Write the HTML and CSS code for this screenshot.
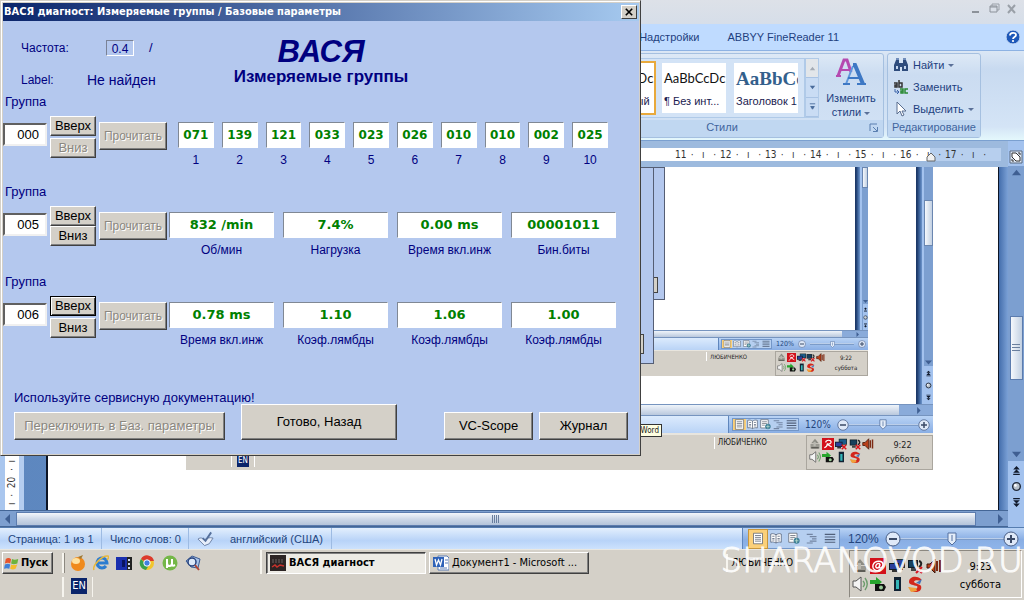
FILE: index.html
```html
<!DOCTYPE html>
<html lang="ru">
<head>
<meta charset="utf-8">
<title>ВАСЯ диагност</title>
<link rel="stylesheet" href="styles.css">
</head>
<body>
<svg class="defs" aria-hidden="true">
  <symbol id="i-eject" viewBox="0 0 16 16"><path d="M8 1l5 6H3z" fill="#8c8c84"/><path d="M2 8h12v6H2z" fill="#9b9a92"/><path d="M3 12h10v2H3z" fill="#5d5c56"/><path d="M6 5h3v6H6z" fill="#b9b8b0"/></symbol>
  <symbol id="i-avira" viewBox="0 0 16 16"><path d="M0 0h16v16H0z" fill="#d3111b"/><path d="M3 13c3-1 4-3 5-6M5 6c0-4 8-4 7 0-1 2-4 3-6 2M8 9l5 3" fill="none" stroke="#fff" stroke-width="1.600"/></symbol>
  <symbol id="i-at" viewBox="0 0 16 16"><path d="M0 0h16v16H0z" fill="#d3111b"/><path d="M10 6c-3-2-6 3-3 4 2 0 3-2 3-4l-1 3c0 2 4 1 4-2 0-5-8-5-10 0-1 5 4 7 8 5" fill="none" stroke="#fff" stroke-width="1.400"/></symbol>
  <symbol id="i-net" viewBox="0 0 16 16"><path d="M5 1h11v8H5z" fill="#233"/><path d="M6 2h9v6H6z" fill="#1b5d8c"/><path d="M0 5h10v7H0z" fill="#111c24"/><path d="M1 6h8v5H1z" fill="#2b3f9a"/><path d="M3 12h5v2H3z" fill="#333"/><path d="M9 9l6 6M15 9l-6 6" stroke="#d8141c" stroke-width="2"/></symbol>
  <symbol id="i-netok" viewBox="0 0 16 16"><path d="M5 1h11v9H5z" fill="#233"/><path d="M6 2h9v7H6z" fill="#2b3f9a"/><path d="M0 5h10v7H0z" fill="#111c24"/><path d="M1 6h8v5H1z" fill="#2b3f9a"/><path d="M3 12h5v2H3zM11 10h3v2h-3z" fill="#333"/></symbol>
  <symbol id="i-net2" viewBox="0 0 16 16"><path d="M1 2h10v8H1z" fill="#111c24"/><path d="M2 3h8v6H2z" fill="#17405c"/><path d="M4 10h5v3H4z" fill="#444"/><path d="M12 3c3 1 3 4 0 6" fill="none" stroke="#222" stroke-width="2"/><path d="M9 9l6 6M15 9l-6 6" stroke="#d8141c" stroke-width="2"/></symbol>
  <symbol id="i-horn" viewBox="0 0 16 16"><path d="M1 6h3l5-5v14l-5-5H1z" fill="#b8401a" stroke="#3c1408"/><path d="M11 3v10M14 2v12" stroke="#7c2a14" stroke-width="2"/></symbol>
  <symbol id="i-vol" viewBox="0 0 16 16"><path d="M1 5h3l5-4v14l-5-4H1z" fill="#f4f4f4" stroke="#555"/><path d="M11 5c2 2 2 4 0 6M13 2c3 4 3 8 0 12" fill="none" stroke="#6c9c6c" stroke-width="1.400"/></symbol>
  <symbol id="i-usb" viewBox="0 0 16 16"><path d="M0 4h6V1l6 5-6 5V8H0z" fill="#27a52d"/><path d="M5 8h9l2 3-2 4H5z" fill="#111"/><circle cx="11" cy="11.500" r="2" fill="#9c9"/></symbol>
  <symbol id="i-batt" viewBox="0 0 16 16"><path d="M5 1h7v14H5z" fill="#123"/><path d="M7 4h3v9H7z" fill="#35b6b8"/></symbol>
  <symbol id="i-cc" viewBox="0 0 16 16"><path d="M14 3C9-1 2 1 2 6c0 3 5 3 8 4 1 1 0 3-2 3-3 0-5-1-6-2 1 4 4 5 7 5 4 0 6-3 5-6-1-2-5-2-7-4 0-2 4-2 7-1z" fill="#d2271c"/><path d="M9 7l6-4-2 5z" fill="#4272ba"/><path d="M1 11l8 1 1 3-6 1z" fill="#f0a03a"/></symbol>
  <symbol id="i-page" viewBox="0 0 16 16"><path d="M2 1h12v14H2z" fill="#fff" stroke="#59606e"/><path d="M4 4h8M4 6.500h8M4 9h8M4 11.500h8" stroke="#59606e"/></symbol>
  <symbol id="i-book" viewBox="0 0 16 16"><path d="M1 2c3-1 5 0 7 1 2-1 4-2 7-1v11c-3-1-5 0-7 1-2-1-4-2-7-1z" fill="#fff" stroke="#4c5a70"/><path d="M8 3v11M3 5h3M3 8h3M3 10h3M10 5h3M10 8h3M10 10h3" stroke="#4c5a70"/></symbol>
  <symbol id="i-web" viewBox="0 0 16 16"><path d="M1 1h11v12H1z" fill="#fff" stroke="#59606e"/><path d="M3 4h7M3 6.500h7M3 9h4" stroke="#59606e"/><circle cx="11.500" cy="11" r="4" fill="#3d7f96"/><path d="M9 11h5M11.500 8v6" stroke="#bfe0d0"/></symbol>
  <symbol id="i-outline" viewBox="0 0 16 16"><path d="M1 2.500h8M5 5.500h9M8 8.500h6M5 11.500h9M1 14h8" stroke="#7385a2" stroke-width="1.500"/></symbol>
  <symbol id="i-draft" viewBox="0 0 16 16"><path d="M1 2.500h14M1 6h14M1 9.500h14M1 13h14" stroke="#51607a" stroke-width="1.500"/></symbol>
  <symbol id="i-up" viewBox="0 0 10 10"><path d="M5 2l5 6H0z" fill="#3f5f92"/></symbol>
  <symbol id="i-down" viewBox="0 0 10 10"><path d="M5 8l5-6H0z" fill="#3f5f92"/></symbol>
  <symbol id="i-left" viewBox="0 0 10 10"><path d="M2 5l5-5v10z" fill="#3f5f92"/></symbol>
  <symbol id="i-right" viewBox="0 0 10 10"><path d="M8 5L3 0v10z" fill="#3f5f92"/></symbol>
  <symbol id="i-pgup" viewBox="0 0 10 10"><path d="M5 1l3 3H2zM5 4l3 3H2zM2 8h6v1H2z" fill="#111a2c"/></symbol>
  <symbol id="i-pgdn" viewBox="0 0 10 10"><path d="M2 1h6v1H2zM5 6L2 3h6zM5 9L2 6h6z" fill="#111a2c"/></symbol>
  <symbol id="i-ball" viewBox="0 0 10 10"><circle cx="5" cy="5" r="3.500" fill="#b9c2cc" stroke="#222b3c" stroke-width="1.300"/><circle cx="4" cy="4" r="1.200" fill="#fff"/></symbol>
  <symbol id="i-minus" viewBox="0 0 16 16"><circle cx="8" cy="8" r="7" fill="#dfe9f8" stroke="#4a5f86"/><path d="M4 8h8" stroke="#3b4a66" stroke-width="2"/></symbol>
  <symbol id="i-plus" viewBox="0 0 16 16"><circle cx="8" cy="8" r="7" fill="#dfe9f8" stroke="#4a5f86"/><path d="M4 8h8M8 4v8" stroke="#3b4a66" stroke-width="2"/></symbol>
  <symbol id="i-knob" viewBox="0 0 10 14"><path d="M1 1h8v8l-4 4-4-4z" fill="#e4edf9" stroke="#5470a0"/><path d="M5 3v6" stroke="#5470a0"/></symbol>
</svg>

<div class="desktop">
  <main class="word">
    <header class="word-title">
      <svg class="win-ctl" viewBox="0 0 52 14" aria-hidden="true"><path d="M4 11h7" stroke="#8c929a" stroke-width="2"/><path d="M24 5V3h7v6h-2" fill="none" stroke="#9aa0a8"/><path d="M22 5h7v6h-7z" fill="none" stroke="#8c929a"/><path d="M22 6h7" stroke="#8c929a"/><path d="M40 4l7 8M47 4l-7 8" stroke="#9aa0a8" stroke-width="2"/></svg>
    </header>
    <nav class="tabs">
      <a class="tab" href="#">Надстройки</a>
      <a class="tab" href="#">ABBYY FineReader 11</a>
      <svg class="help" viewBox="0 0 16 16" aria-hidden="true"><circle cx="8" cy="8" r="7" fill="#1e58b8" stroke="#c8dcf6"/><path d="M5 6.500C5 3 11 3 11 6c0 2-3 2-3 4" fill="none" stroke="#fff" stroke-width="1.800"/><circle cx="8" cy="12" r="1.100" fill="#fff"/></svg>
    </nav>
    <section class="ribbon">
      <div class="rgroup styles-group">
        <div class="rbody">
          <div class="gallery">
            <button class="style current"><span class="sample">AaBbCcDc</span><span class="sname">¶ Обычный</span></button>
            <button class="style"><span class="sample">AaBbCcDc</span><span class="sname">¶ Без инт...</span></button>
            <button class="style"><span class="sample heading">AaBbCc</span><span class="sname">Заголовок 1</span></button>
          </div>
          <div class="spinner">
            <button class="spin dim" aria-label="Вверх"><svg viewBox="0 0 10 10"><path d="M5 3l3 4H2z" fill="#a4abb5"/></svg></button>
            <button class="spin" aria-label="Вниз"><svg viewBox="0 0 10 10"><path d="M5 7L2 3h6z" fill="#4a6c9c"/></svg></button>
            <button class="spin" aria-label="Ещё"><svg viewBox="0 0 10 10"><path d="M2 2h6M5 8L3 5h4z" fill="#4a6c9c" stroke="#4a6c9c"/></svg></button>
          </div>
          <button class="change">
            <svg class="aa" viewBox="0 0 30 28" aria-hidden="true"><path d="M2 18L8 2h3l4 12" fill="none" stroke="#b54ab0" stroke-width="3"/><path d="M5 12h8M0 18h5" stroke="#b54ab0" stroke-width="2"/><path d="M10 26l7-18" fill="none" stroke="#5f97dc" stroke-width="2"/><path d="M17 7h2l8 19" fill="none" stroke="#3e78c4" stroke-width="4"/><path d="M12 20h12M7 26h7M21 26h9" stroke="#3e78c4" stroke-width="2"/></svg>
            <span>Изменить<br>стили <i class="caret"></i></span>
          </button>
        </div>
        <div class="rlabel">Стили<svg class="launch" viewBox="0 0 10 10" aria-hidden="true"><path d="M1 8V1h7M4 4l4 4M8.500 4v4.500H4" fill="none" stroke="#5a7fb0"/></svg></div>
      </div>
      <div class="rgroup edit-group">
        <div class="rbody edit">
          <button class="cmd"><svg viewBox="0 0 16 16" aria-hidden="true"><path d="M3 3h3v3h4V3h3l2 5v6H9v-4H7v4H1V8z" fill="#2e4c7c"/><path d="M3 1h3v2H3zM10 1h3v2h-3z" fill="#6f8cba"/><path d="M3 9h2v3H3zM11 9h2v3h-2z" fill="#c4d6ee"/></svg>Найти <i class="caret"></i></button>
          <button class="cmd"><svg viewBox="0 0 16 16" aria-hidden="true"><path d="M1 4h3v4H2V6h2M6 1v7h3V4H6" fill="none" stroke="#333" stroke-width="1.500"/><path d="M2 10v3h4M4 11l2 2-2 2" fill="none" stroke="#3b62a8"/><path d="M7 10h3v4H8v-2h2M15 10h-3v4h3" fill="none" stroke="#2a8a34" stroke-width="1.500"/></svg>Заменить</button>
          <button class="cmd"><svg viewBox="0 0 16 16" aria-hidden="true"><path d="M4 1v12l3-3 2 5 2-1-2-4h4z" fill="#fff" stroke="#5a6e90"/></svg>Выделить <i class="caret"></i></button>
        </div>
        <div class="rlabel">Редактирование</div>
      </div>
    </section>

    <div class="work">
      <div class="canvas">
        <div class="ruler">
          <div class="scale">
            <span class="cm">11</span><span class="cm">12</span><span class="cm">13</span><span class="cm">14</span><span class="cm">15</span><span class="cm">16</span><span class="cm">17</span>
          </div>
          <svg class="indent" viewBox="0 0 10 10" aria-hidden="true"><path d="M5 1l4 4v4H1V5z" fill="#f0f0f0" stroke="#666"/></svg>
        </div>
        <div class="doc">
          <div class="vruler"><span>ı  ·  20  ·  ı</span></div>
          <div class="page">
            <div class="shot">
              <div class="s-body">
                <div class="s-page">
                  <div class="shot small">
                    <div class="s-body">
                      <div class="s-page"></div>
                      <div class="s-edge"></div>
                      <div class="s-scroll"><i class="s-thumb"></i><svg><use href="#i-down"/></svg><div class="s-nav"><svg><use href="#i-pgup"/></svg><svg><use href="#i-ball"/></svg><svg><use href="#i-pgdn"/></svg></div></div>
                    </div>
                    <div class="s-hscroll"><i></i><svg><use href="#i-right"/></svg></div>
                    <div class="s-status"><div class="s-zoom"><span class="s-views"><svg><use href="#i-page"/></svg><svg><use href="#i-book"/></svg><svg><use href="#i-web"/></svg><svg><use href="#i-outline"/></svg><svg><use href="#i-draft"/></svg></span><span>120%</span><span class="track"><svg class="round"><use href="#i-minus"/></svg><svg class="knob"><use href="#i-knob"/></svg><svg class="round"><use href="#i-plus"/></svg></span></div></div>
                    <div class="s-task"><span class="s-user">ЛЮБИЧЕНКО</span><div class="s-tray"><div class="icons"><svg><use href="#i-eject"/></svg><svg><use href="#i-avira"/></svg><svg><use href="#i-net"/></svg><svg><use href="#i-net2"/></svg><svg><use href="#i-horn"/></svg><svg><use href="#i-vol"/></svg><svg><use href="#i-usb"/></svg><svg><use href="#i-batt"/></svg><svg><use href="#i-cc"/></svg></div><div class="clock"><span>9:22</span><span>суббота</span></div></div></div>
                    <div class="s-window"><i class="s-button"></i></div>
                  </div>
                </div>
                <div class="s-edge"></div>
                <div class="s-scroll"><i class="s-thumb"></i><svg><use href="#i-down"/></svg><div class="s-nav"><svg><use href="#i-pgup"/></svg><svg><use href="#i-ball"/></svg><svg><use href="#i-pgdn"/></svg></div></div>
              </div>
              <div class="s-hscroll"><i></i><svg><use href="#i-right"/></svg></div>
              <div class="s-status"><div class="s-zoom"><span class="s-views"><svg><use href="#i-page"/></svg><svg><use href="#i-book"/></svg><svg><use href="#i-web"/></svg><svg><use href="#i-outline"/></svg><svg><use href="#i-draft"/></svg></span><span>120%</span><span class="track"><svg class="round"><use href="#i-minus"/></svg><svg class="knob"><use href="#i-knob"/></svg><svg class="round"><use href="#i-plus"/></svg></span></div></div>
              <div class="s-task"><span class="s-lang">EN</span><span class="s-user">ЛЮБИЧЕНКО</span><div class="s-tray"><div class="icons"><svg><use href="#i-eject"/></svg><svg><use href="#i-avira"/></svg><svg><use href="#i-net"/></svg><svg><use href="#i-net2"/></svg><svg><use href="#i-horn"/></svg><svg><use href="#i-vol"/></svg><svg><use href="#i-usb"/></svg><svg><use href="#i-batt"/></svg><svg><use href="#i-cc"/></svg></div><div class="clock"><span>9:22</span><span>суббота</span></div></div></div>
              <div class="s-window"><i class="s-button"></i></div>
              <span class="s-tip">Word</span>
            </div>
          </div>
          <div class="edge"></div>
        </div>
        <div class="hscroll"><svg><use href="#i-left"/></svg><div class="hthumb"><i class="grip"></i></div><svg><use href="#i-right"/></svg></div>
      </div>
      <div class="vscroll">
        <svg class="rtoggle" viewBox="0 0 14 14" aria-hidden="true"><path d="M1 1h12v12H1z" fill="#dce6f4" stroke="#59687e"/><path d="M3 7V3h4l4 4v4H7zM9 3h2v2M3 9v2h2" fill="#fff" stroke="#333"/></svg>
        <div class="vtrack"><svg><use href="#i-up"/></svg><div class="vthumb"><i class="grip"></i></div><svg><use href="#i-down"/></svg></div>
        <div class="vnav"><svg><use href="#i-pgup"/></svg><svg><use href="#i-ball"/></svg><svg><use href="#i-pgdn"/></svg></div>
      </div>
    </div>

    <footer class="status">
      <span class="cell c1">Страница: 1 из 1</span>
      <span class="cell c2">Число слов: 0</span>
      <span class="cell c3"><svg class="proof" viewBox="0 0 18 16" aria-hidden="true"><path d="M1 8c3-2 5-1 7 1 2-2 5-3 9-2l-4 6-5 2z" fill="#e6eefa" stroke="#6b80a4"/><path d="M6 7l3 3 6-9" fill="none" stroke="#55709c" stroke-width="2"/></svg>английский (США)</span>
      <div class="zoombar">
        <div class="views">
          <button class="view on" aria-label="Разметка"><svg><use href="#i-page"/></svg></button><button class="view" aria-label="Чтение"><svg><use href="#i-book"/></svg></button><button class="view" aria-label="Веб"><svg><use href="#i-web"/></svg></button><button class="view" aria-label="Структура"><svg><use href="#i-outline"/></svg></button><button class="view" aria-label="Черновик"><svg><use href="#i-draft"/></svg></button>
        </div>
        <span class="pct">120%</span>
        <span class="track"><svg class="round"><use href="#i-minus"/></svg><svg class="knob"><use href="#i-knob"/></svg><svg class="round"><use href="#i-plus"/></svg></span>
      </div>
    </footer>
  </main>

  <footer class="taskbar">
    <button class="start"><svg viewBox="0 0 18 16" aria-hidden="true"><path d="M2 3c3-2 4-1 6 0L7 8C5 7 4 7 1 8z" fill="#e8542c"/><path d="M9 3c2 1 4 1 7 0l-1 5c-3 1-5 1-7 0z" fill="#6cb33c"/><path d="M1 9c3-1 4-1 6 0l-1 5c-2-1-4-1-6 0z" fill="#3f7fd8"/><path d="M8 9c2 1 4 1 7 0l-2 5c-2 1-4 1-6 0z" fill="#f4bc2c"/></svg>Пуск</button>
    <div class="toolbars">
      <div class="quick">
        <svg viewBox="0 0 16 16" aria-hidden="true"><circle cx="8" cy="9" r="7" fill="#f08a1c"/><ellipse cx="6" cy="6" rx="4" ry="3" fill="#ffe2a0"/><path d="M8 2l5-2-2 4z" fill="#a07a34"/></svg>
        <svg viewBox="0 0 16 16" aria-hidden="true"><path d="M13 11a5 5 0 1 1 1-3H4" fill="none" stroke="#2c7cd0" stroke-width="3"/><path d="M1 15C-1 11 9 0 15 1c1 1 0 3-1 4" fill="none" stroke="#e8b83c" stroke-width="1.500"/></svg>
        <svg viewBox="0 0 16 16" aria-hidden="true"><path d="M0 2h16v13H0z" fill="#1a2fae"/><path d="M6 5h3v7H6z" fill="#0a1560"/><path d="M11 2h5v13h-5z" fill="#222"/><path d="M12 4h2v2h-2zM12 8h2v2h-2zM12 12h2v2h-2z" fill="#c8d4ee"/></svg>
        <svg viewBox="0 0 16 16" aria-hidden="true"><circle cx="8" cy="8" r="7" fill="#f2c52c"/><path d="M8 8L2 4a7 7 0 0 1 13 2H8z" fill="#dc3a2c"/><path d="M2 4a7 7 0 0 0 5 11l3-5-3-1z" fill="#38a04c"/><circle cx="8" cy="8" r="3.200" fill="#3f7fe0" stroke="#fff"/></svg>
        <svg viewBox="0 0 16 16" aria-hidden="true"><circle cx="8" cy="8" r="7.500" fill="#74b748"/><path d="M5 13V4M5 8c0 4 5 4 5 0V4v5c0 2 1 2 3 1" fill="none" stroke="#fff" stroke-width="2"/></svg>
        <svg viewBox="0 0 16 16" aria-hidden="true"><path d="M1 6l6-5 8 3-2 9-7-1z" fill="#a9c4ea" stroke="#3d5c94"/><circle cx="7" cy="7" r="4" fill="#dce9fa" stroke="#26417c" stroke-width="1.500"/><path d="M10 10l4 5" stroke="#b04434" stroke-width="2"/></svg>
      </div>
      <div class="langbar"><span class="lang">EN</span></div>
    </div>
    <div class="tasks">
      <button class="task active"><svg viewBox="0 0 16 16" aria-hidden="true"><path d="M0 0h16v16H0z" fill="#2c2424"/><path d="M2 5h12M2 7h12" stroke="#6a6262" stroke-dasharray="2 1"/><path d="M2 12l3-2 2 2 3-2 4 1" fill="none" stroke="#c8322c" stroke-width="1.500"/></svg><span>ВАСЯ диагност</span></button>
      <button class="task"><svg viewBox="0 0 16 16" aria-hidden="true"><path d="M5 1h9l2 2v12H5z" fill="#fff" stroke="#5c7cb4"/><path d="M12 5h3M12 8h3M7 13h7" stroke="#5c7cb4"/><path d="M0 2h11v10H0z" fill="#2f62b8"/><path d="M2 4l1.500 6L5.500 5l2 5L9 4" fill="none" stroke="#fff" stroke-width="1.300"/></svg><span>Документ1 - Microsoft ...</span></button>
    </div>
    <div class="user">ЛЮБИЧЕНКО</div>
    <div class="tray"><div class="icons"><svg><use href="#i-eject"/></svg><svg><use href="#i-at"/></svg><svg><use href="#i-netok"/></svg><svg><use href="#i-net2"/></svg><svg><use href="#i-horn"/></svg><svg><use href="#i-vol"/></svg><svg><use href="#i-usb"/></svg><svg><use href="#i-batt"/></svg><svg><use href="#i-cc"/></svg></div><div class="clock"><span>9:23</span><span>суббота</span></div></div>
  </footer>

  <section class="dialog" aria-labelledby="dlg-title">
    <div class="dlg-bar"><span id="dlg-title">ВАСЯ диагност: Измеряемые группы / Базовые параметры</span><button class="close" aria-label="Закрыть"><svg viewBox="0 0 10 10"><path d="M1 1l8 8M9 1L1 9" stroke="#000" stroke-width="2"/></svg></button></div>
    <div class="dlg-body">
      <div class="head">
        <dl class="info">
          <dt>Частота:</dt><dd><span class="freq">0.4</span><span>/</span></dd>
          <dt>Label:</dt><dd class="found">Не найден</dd>
        </dl>
        <div class="brand"><h1>ВАСЯ</h1><h2>Измеряемые группы</h2></div>
      </div>

      <div class="group">
        <label class="glabel" for="g1">Группа</label>
        <div class="grow">
          <input class="num" id="g1" value="000">
          <div class="updown spaced"><button class="btn">Вверх</button><button class="btn" disabled>Вниз</button></div>
          <button class="btn read" disabled>Прочитать</button>
          <div class="values ten">
            <div class="val"><output>071</output><span>1</span></div>
            <div class="val"><output>139</output><span>2</span></div>
            <div class="val"><output>121</output><span>3</span></div>
            <div class="val"><output>033</output><span>4</span></div>
            <div class="val"><output>023</output><span>5</span></div>
            <div class="val"><output>026</output><span>6</span></div>
            <div class="val"><output>010</output><span>7</span></div>
            <div class="val"><output>010</output><span>8</span></div>
            <div class="val"><output>002</output><span>9</span></div>
            <div class="val"><output>025</output><span>10</span></div>
          </div>
        </div>
      </div>
      <div class="group">
        <label class="glabel" for="g2">Группа</label>
        <div class="grow">
          <input class="num" id="g2" value="005">
          <div class="updown"><button class="btn">Вверх</button><button class="btn">Вниз</button></div>
          <button class="btn read" disabled>Прочитать</button>
          <div class="values">
            <div class="val"><output>832 /min</output><span>Об/мин</span></div>
            <div class="val"><output>7.4%</output><span>Нагрузка</span></div>
            <div class="val"><output>0.00 ms</output><span>Время вкл.инж</span></div>
            <div class="val"><output>00001011</output><span>Бин.биты</span></div>
          </div>
        </div>
      </div>
      <div class="group">
        <label class="glabel" for="g3">Группа</label>
        <div class="grow">
          <input class="num" id="g3" value="006">
          <div class="updown spaced"><button class="btn default">Вверх</button><button class="btn">Вниз</button></div>
          <button class="btn read" disabled>Прочитать</button>
          <div class="values">
            <div class="val"><output>0.78 ms</output><span>Время вкл.инж</span></div>
            <div class="val"><output>1.10</output><span>Коэф.лямбды</span></div>
            <div class="val"><output>1.06</output><span>Коэф.лямбды</span></div>
            <div class="val"><output>1.00</output><span>Коэф.лямбды</span></div>
          </div>
        </div>
      </div>

      <div class="foot">
        <p class="hint">Используйте сервисную документацию!</p>
        <div class="actions">
          <button class="btn switch" disabled>Переключить в Баз. параметры</button>
          <button class="btn done">Готово, Назад</button>
          <button class="btn side">VC-Scope</button>
          <button class="btn side">Журнал</button>
        </div>
      </div>
    </div>
  </section>

  <div class="mark">SHARANOVOD.RU</div>
</div>
</body>
</html>
```
FILE: styles.css
```css
* { box-sizing: border-box; }
body { margin: 0; font: 11px/16px "Liberation Sans", Arial, sans-serif; color: #1c3a74; }
button, input, output { font: inherit; color: inherit; margin: 0; padding: 0; }
button { border: 0; background: none; }
svg { display: block; flex: none; }
.defs { position: absolute; width: 0; height: 0; }
.desktop { position: relative; display: flex; flex-direction: column; height: 100vh; min-height: 600px; overflow: hidden; background: #fff; }

/* Word window */
.word { flex: 1; min-height: 0; display: flex; flex-direction: column; }
.word-title { height: 24px; background: linear-gradient(#dde1e8, #d6dee9); display: flex; justify-content: flex-end; padding: 1px 4px; }
.win-ctl { width: 52px; height: 14px; }
.tabs { height: 26px; display: flex; align-items: center; justify-content: flex-end; background: #bfdbff; padding-right: 3px; }
.tab { color: #1e3f80; text-decoration: none; margin-right: 28px; }
.tab:nth-child(2) { margin-right: 166px; }
.help { width: 16px; height: 16px; }
.ribbon { height: 91px; display: flex; justify-content: flex-end; gap: 3px; padding: 2px 43px 2px 0; background: linear-gradient(#dbe7f5, #c8daf0 20%, #d4e4f6 85%, #e4f8fc); border-top: 1px solid #8db2e3; border-bottom: 1px solid #7ba0d0; }
.rgroup { display: flex; flex-direction: column; border: 1px solid #a5c0e0; border-radius: 3px; background: linear-gradient(#dde9f6, #cbdcf1 25%, #d2e2f5); }
.rbody { flex: 1; display: flex; }
.rlabel { position: relative; height: 17px; line-height: 15px; text-align: center; color: #41659e; background: #c0d7f1; padding: 0 4px; }
.styles-group .rlabel { padding-left: 140px; }
.styles-group { width: 460px; }
.edit-group { width: 94px; }
.styles-group .rbody { justify-content: flex-end; padding-top: 4px; }
.launch { position: absolute; right: 4px; top: 3px; width: 10px; height: 10px; }
.gallery { display: flex; gap: 4px; height: 60px; padding: 2px 4px; background: #d3e3f6; border: 1px solid #b0cae8; }
.style { width: 68px; height: 54px; padding: 4px 2px; background: #fff; border: 2px solid #d3e3f6; overflow: hidden; white-space: nowrap; color: #1a1a50; text-align: left; display: flex; flex-direction: column; justify-content: space-between; }
.style.current { border-color: #e8a93c; }
.sample { font: 13px/22px Lato, sans-serif; color: #111; }
.sample.heading { font: bold 19px/24px "Liberation Serif", serif; color: #33608c; }
.spinner { display: flex; flex-direction: column; height: 60px; width: 14px; border: 1px solid #b0cae8; }
.spin { flex: 1; background: #c9dcf4; border-bottom: 1px solid #a9c3e4; display: grid; place-items: center; }
.spin.dim { background: #e2e6ea; }
.spin svg { width: 9px; height: 9px; }
.change { width: 64px; color: #1e3f80; display: flex; flex-direction: column; align-items: center; line-height: 14px; gap: 5px; }
.aa { width: 30px; height: 28px; }
.caret { display: inline-block; border: 3px solid transparent; border-top-color: #5a7098; border-bottom: 0; vertical-align: middle; }
.edit { flex-direction: column; padding: 0 5px; }
.cmd { height: 22px; display: flex; align-items: center; gap: 4px; color: #1e3f80; }
.cmd svg { width: 16px; height: 16px; }

.work { flex: 1; min-height: 0; display: flex; }
.canvas { flex: 1; min-width: 0; display: flex; flex-direction: column; }
.ruler { position: relative; height: 26px; background: #9dbade; padding: 7px 7px 6px 0; display: flex; }
.scale { flex: 1; display: flex; justify-content: flex-end; background: linear-gradient(90deg, #fff calc(100% - 71px), #b7cfee 0); font: 10px/13px "DejaVu Sans Condensed", "DejaVu Sans", sans-serif; color: #333; padding-right: 11px; }
.cm { width: 45px; display: flex; justify-content: space-between; padding-right: 4px; }
.cm::after { content: "·   ı   ·"; white-space: pre; }
.indent { position: absolute; right: 72px; bottom: 5px; width: 10px; height: 10px; }
.doc { flex: 1; min-height: 0; display: flex; background: linear-gradient(90deg, #5d87bf, #6c94cb); }
.vruler { width: 24px; margin-right: 22px; padding-bottom: 5px; display: flex; justify-content: flex-start; align-items: flex-end; background: linear-gradient(90deg, #a9c6ee 5px, #fff 5px, #fff 19px, #b4cdf0 19px); }
.vruler span { writing-mode: vertical-rl; transform: rotate(180deg); font: 10px/14px "DejaVu Sans Condensed", sans-serif; color: #333; margin-left: 5px; white-space: pre; }
.page { flex: 1; min-width: 0; background: #fff; border: solid #0c1424; border-width: 0 1px 0 2px; padding-left: 138px; padding-right: 65px; }
.edge { width: 9px; background: linear-gradient(90deg, #446eac, #7ba1d6); }
.hscroll { height: 17px; display: flex; align-items: center; background: #7d9fcf; border: solid #446696; border-width: 1px 0; }
.hscroll svg { width: 10px; height: 10px; margin: 0 3px; }
.hscroll svg:last-child { margin: 0 3px 0 19px; }
.hthumb { flex: 1; height: 14px; background: linear-gradient(#f3f6fb, #cdd8e8 50%, #b4c4da); border: 1px solid #5c7cae; display: grid; place-items: center; }
.grip { width: 8px; height: 8px; background: repeating-linear-gradient(90deg, #6a7f9e 0 1px, transparent 1px 2px); }
.vscroll { width: 16px; display: flex; flex-direction: column; align-items: center; background: #a3c2ee; }
.rtoggle { width: 14px; height: 14px; margin: 9px 0 2px; }
.vtrack { flex: 1; width: 16px; display: flex; flex-direction: column; align-items: center; background: #7c9fd0; padding: 2px 0; }
.vtrack svg { width: 9px; height: 9px; }
.vthumb { width: 13px; height: 64px; margin: 139px 0 auto; background: linear-gradient(90deg, #f5f8fc, #c2d0e2); border: 1px solid #5c7cae; display: grid; place-items: center; }
.vthumb .grip { background: repeating-linear-gradient(#6a7f9e 0 1px, transparent 1px 3px); }
.vnav { display: flex; flex-direction: column; gap: 5px; padding: 4px 0 19px; }
.vnav svg { width: 11px; height: 11px; }

.status { height: 22px; display: flex; background: linear-gradient(#e3effd, #b8d3f8 60%, #cde2fd); border-top: 1px solid #567db0; color: #24467e; line-height: 20px; }
.cell { border-right: 1px solid #9dbbe3; padding-left: 8px; white-space: nowrap; display: flex; align-items: center; }
.c1 { width: 102px; }
.c2 { width: 87px; }
.c3 { width: 143px; gap: 16px; }
.proof { width: 17px; height: 16px; }
.zoombar { margin-left: auto; width: 282px; display: flex; align-items: center; padding: 0 5px; background: linear-gradient(#b9d3f5, #89aee4 55%, #8fb5ea); border-left: 1px solid #5f86bd; }
.views { display: flex; border: 1px solid #7396c8; background: #b6cff0; }
.view { width: 18px; height: 18px; display: grid; place-items: center; }
.view.on { background: #fbd07a; outline: 1px solid #c8963c; }
.view svg { width: 12px; height: 13px; }
.pct { width: 45px; padding-left: 8px; font-size: 12px; }
.track { flex: 1; display: flex; align-items: center; justify-content: space-between; background: linear-gradient(#dbe8fa, #5c82b8) center / calc(100% - 24px) 2px no-repeat; }
.round { width: 16px; height: 16px; }
.knob { width: 10px; height: 14px; }

/* Screenshot pasted in the page */
.shot { position: relative; height: 303px; display: flex; flex-direction: column; background: #fff; font: 10px/12px "DejaVu Sans Condensed", "DejaVu Sans", sans-serif; color: #222; }
.s-body { flex: 1; min-height: 0; display: flex; }
.s-page { flex: 1; display: flex; justify-content: flex-end; padding-right: 48px; }
.s-edge { width: 6px; background: linear-gradient(90deg, #1c3868 1px, #3f669e, #6f96cc); }
.s-scroll { width: 11px; padding-top: 33px; background: #7c9fd0; display: flex; flex-direction: column; align-items: center; border-left: 2px solid #a3c2ee; }
.s-thumb { width: 9px; height: 46px; margin-bottom: auto; background: linear-gradient(90deg, #f5f8fc, #c2d0e2); border: 1px solid #6a86b0; }
.s-scroll svg { width: 7px; height: 7px; }
.s-nav { background: #a3c2ee; display: flex; flex-direction: column; align-items: center; gap: 5px; padding: 4px 1px 3px; }
.s-hscroll { height: 12px; display: flex; align-items: center; justify-content: flex-end; background: #8aabda; border: 1px solid #7694bf; border-right: 0; }
.s-hscroll i { flex: 1; height: 10px; background: linear-gradient(#eff4fa, #b9c8dd); }
.s-hscroll svg { width: 7px; height: 7px; margin: 0 11px 0 16px; }
.s-status { height: 17px; display: flex; justify-content: flex-end; background: linear-gradient(#dcebfd, #b9d3f6); color: #24467e; }
.s-zoom { width: 205px; display: flex; align-items: center; gap: 6px; padding: 0 3px; background: linear-gradient(#b9d3f5, #89aee4); border-left: 1px solid #5f86bd; }
.s-views { display: flex; justify-content: space-between; width: 67px; border: 1px solid #7396c8; background: linear-gradient(90deg, #fbd07a 20%, #b6cff0 20%); padding: 0 1px; }
.s-views svg { width: 11px; height: 11px; }
.s-zoom .round { width: 12px; height: 12px; }
.s-zoom .knob { width: 8px; height: 11px; }
.s-task { height: 37px; display: flex; background: #d4d0c8; border-top: 2px solid #e8e5de; }
.s-lang { align-self: flex-end; width: 24px; margin: 0 0 3px 45px; padding: 0 5px; border: solid #fff; border-width: 0 1px; color: #fff; font-size: 8px; background: #0a246a content-box; text-align: center; }
.s-user { margin: 2px 39px 0 auto; padding-left: 3px; height: 12px; border-left: 1px solid #fff; font-size: 8px; }
.s-tray { width: 127px; display: flex; border: 1px solid #aaa69e; padding: 2px; }
.icons { display: grid; grid-template-columns: repeat(5, 1fr); align-content: start; }
.s-tray .icons { width: 66px; row-gap: 1px; }
.s-tray .icons svg { width: 12px; height: 12px; }
.clock { flex: 1; display: flex; flex-direction: column; align-items: center; }
.s-tray .clock { line-height: 14px; font-size: 9px; }
.s-window { position: absolute; left: 0; top: 0; width: 468px; height: 197px; background: #b4c8ee; border: 1px solid #555e74; }
.s-button { position: absolute; right: 9px; bottom: 9px; width: 40px; height: 20px; background: #d4d0c8; border: 1px solid #444; }
.s-tip { position: absolute; right: 271px; top: 257px; padding: 0 2px; border: 1px solid #333; background: #ffffe1; line-height: 11px; font-size: 8px; white-space: nowrap; }
.small { width: 568px; height: 209px; font-size: 7px; line-height: 9px; }
.small .s-page { padding: 0; }
.small .s-edge { width: 5px; }
.small .s-scroll { width: 8px; padding-top: 0; }
.small .s-thumb { width: 6px; height: 21px; }
.small .s-scroll svg { width: 5px; height: 5px; }
.small .s-nav { gap: 3px; padding: 3px 0 2px; }
.small .s-hscroll { height: 8px; }
.small .s-hscroll i { height: 6px; }
.small .s-hscroll svg { width: 5px; height: 5px; margin: 0 8px 0 13px; }
.small .s-status { height: 12px; }
.small .s-zoom { width: 150px; gap: 4px; padding: 0 2px; }
.small .s-views { width: 51px; }
.small .s-views svg { width: 8px; height: 8px; }
.small .s-zoom .round { width: 8px; height: 8px; }
.small .s-zoom .knob { width: 5px; height: 7px; }
.small .s-task { height: 26px; border-top-width: 1px; }
.small .s-user { margin: 1px 28px 0 auto; height: 9px; font-size: 6px; }
.small .s-tray { width: 93px; padding: 1px; }
.small .s-tray .icons { width: 49px; row-gap: 1px; }
.small .s-tray .icons svg { width: 9px; height: 9px; }
.small .s-tray .clock { font-size: 6px; line-height: 10px; }
.small .s-window { width: 365px; height: 133px; }
.small .s-button { right: 6px; bottom: 6px; height: 16px; }

/* Taskbar */
.taskbar { height: 51px; display: flex; align-items: flex-start; background: #d4d0c8; border-top: 1px solid #e9e7e1; padding: 0 2px; color: #000; font: 11px/14px "DejaVu Sans Condensed", "DejaVu Sans", sans-serif; }
.start, .task { height: 22px; margin-top: 2px; background: #d4d0c8; border: 1px solid; border-color: #fff #404040 #404040 #fff; box-shadow: inset -1px -1px #808080; display: flex; align-items: center; gap: 3px; }
.start { width: 51px; font-weight: bold; gap: 1px; padding-left: 1px; }
.start svg { width: 16px; height: 15px; }
.toolbars { width: 198px; margin-left: 9px; padding-top: 3px; display: flex; flex-direction: column; gap: 4px; }
.quick { display: flex; align-items: center; gap: 7px; height: 20px; padding-left: 6px; border-left: 2px solid #f6f4ee; box-shadow: inset 1px 0 #8c8880; }
.quick svg { width: 16px; height: 16px; }
.langbar { height: 20px; width: 31px; padding: 1px 0 0 7px; border: solid #f6f4ee; border-width: 0 1px 0 2px; }
.lang { display: block; width: 16px; height: 16px; line-height: 16px; background: #0a246a; color: #fff; text-align: center; }
.tasks { display: flex; gap: 3px; padding-left: 4px; border-left: 2px solid #f6f4ee; }
.task { width: 160px; padding-left: 3px; white-space: nowrap; }
.task svg { width: 16px; height: 16px; }
.task.active { font-weight: bold; background: #edebe5; border-color: #404040 #fff #fff #404040; box-shadow: inset 1px 1px #808080; }
.user { margin: 4px 56px 0 auto; padding-left: 4px; height: 18px; border-left: 2px solid #f6f4ee; line-height: 18px; font-size: 10px; }
.tray { width: 173px; height: 48px; display: flex; padding: 7px 4px 0 2px; border: 1px solid; border-color: #8c8880 #fff #fff #8c8880; }
.tray .icons { width: 92px; row-gap: 2px; }
.tray .icons svg { width: 16px; height: 16px; }
.tray .clock { line-height: 18px; }

/* Dialog */
.dialog { position: absolute; left: 0; top: 0; width: 641px; max-width: 100%; background: #d4d0c8; padding: 2px 1px 1px 2px; border: 1px solid; border-color: #d4d0c8 #404040 #404040 #d4d0c8; box-shadow: inset 1px 1px #fff; color: #000080; font-size: 13px; }
.dlg-bar { height: 18px; display: flex; align-items: center; justify-content: space-between; padding: 0 2px 0 1px; background: linear-gradient(90deg, #0a246a, #a6caf0); color: #fff; font: bold 11px/16px "DejaVu Sans Condensed", "DejaVu Sans", sans-serif; white-space: nowrap; }
.close { width: 16px; height: 14px; display: grid; place-items: center; background: #d4d0c8; border: 1px solid; border-color: #fff #404040 #404040 #fff; }
.close svg { width: 8px; height: 8px; }
.dlg-body { background: #b4c8ee; }
.head { display: grid; grid-template-columns: 1fr auto 1fr; height: 73px; }
.info { display: grid; grid-template-columns: 66px 1fr; align-content: start; row-gap: 16px; margin: 0; padding: 19px 0 0 18px; }
.info dt { font-size: 12px; }
.info dd { margin: 0; display: flex; gap: 15px; }
.info .found { font-size: 14px; }
.freq { width: 28px; height: 16px; margin-left: 19px; border: 1px solid; border-color: #7a8296 #fff #fff #7a8296; text-align: center; font-size: 12px; }
.brand { text-align: center; padding-top: 14px; }
.brand h1 { margin: 0; font: italic bold 31px/34px "Liberation Sans", Arial, sans-serif; }
.brand h2 { margin: 0; font: bold 17px/16px "Liberation Sans", Arial, sans-serif; }
.group { height: 90px; padding-right: 22px; }
.glabel { display: block; height: 22px; padding-left: 2px; }
.grow { display: flex; align-items: flex-start; }
.num { width: 44px; height: 23px; margin-top: 7px; padding-right: 6px; text-align: right; background: #fff; color: #000; border: 2px solid; border-color: #606060 #f0f0f0 #f0f0f0 #606060; outline: 0; }
.updown { display: flex; flex-direction: column; margin: 0 3px; width: 46px; }
.updown.spaced { gap: 2px; }
.btn { height: 20px; background: #d4d0c8; color: #000; border: 1px solid; border-color: #fff #404040 #404040 #fff; box-shadow: inset -1px -1px #808080; text-align: center; white-space: nowrap; }
.btn:disabled { color: #8a8780; text-shadow: 1px 1px #fff; }
.btn.default { border-color: #000; box-shadow: inset 1px 1px #fff, inset -1px -1px #404040; }
.btn.read { width: 68px; height: 28px; margin-top: 6px; font-size: 12px; }
.values { flex: 1; display: grid; grid-template-columns: repeat(4, 1fr); gap: 9px; padding: 6px 1px 0 2px; }
.values.ten { grid-template-columns: repeat(10, 1fr); gap: 8px; padding: 6px 9px 0 11px; }
.val { display: flex; flex-direction: column; align-items: stretch; text-align: center; gap: 4px; font-size: 12px; }
.val output { height: 26px; background: #fff; color: #008000; border: 1px solid; border-color: #808894 #fff #fff #808894; font: bold 13px/24px "DejaVu Sans", sans-serif; white-space: nowrap; }
.values.ten output { font-size: 12px; }
.foot { padding: 26px 11px 14px; }
.hint { margin: 0; height: 14px; line-height: 16px; }
.actions { display: flex; align-items: flex-end; }
.actions .btn { height: 28px; }
.actions .switch { width: 211px; }
.actions .done { width: 156px; height: 36px; margin: 0 auto 0 16px; }
.actions .side { width: 89px; margin-left: 6px; }

.mark { position: absolute; right: 1px; bottom: 21px; font: 200 34px/38px "DejaVu Sans", sans-serif; color: #fff; -webkit-text-stroke: 1px #fff; opacity: .9; pointer-events: none; }
```
